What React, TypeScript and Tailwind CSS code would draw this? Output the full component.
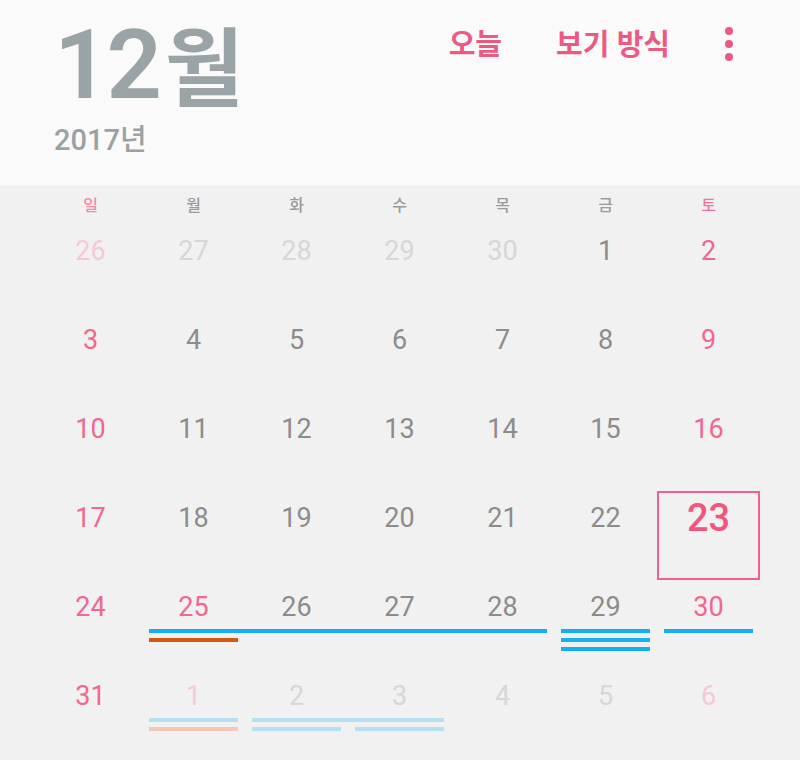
import React from "react";

type Day = { n: number; other?: boolean; weekend?: boolean; today?: boolean };
type Ev = { col: number; span: number; lane: number; color: string };

const weeks: { days: Day[]; events: Ev[] }[] = [
  {
    days: [
      { n: 26, other: true, weekend: true },
      { n: 27, other: true },
      { n: 28, other: true },
      { n: 29, other: true },
      { n: 30, other: true },
      { n: 1 },
      { n: 2, weekend: true },
    ],
    events: [],
  },
  {
    days: [3, 4, 5, 6, 7, 8, 9].map((n, i) => ({ n, weekend: i === 0 || i === 6 })),
    events: [],
  },
  {
    days: [10, 11, 12, 13, 14, 15, 16].map((n, i) => ({ n, weekend: i === 0 || i === 6 })),
    events: [],
  },
  {
    days: [17, 18, 19, 20, 21, 22, 23].map((n, i) => ({
      n,
      weekend: i === 0 || i === 6,
      today: n === 23,
    })),
    events: [],
  },
  {
    days: [24, 25, 26, 27, 28, 29, 30].map((n, i) => ({
      n,
      weekend: i === 0 || i === 6 || n === 25,
    })),
    events: [
      { col: 2, span: 4, lane: 1, color: "bg-[#15b0f1]" },
      { col: 2, span: 1, lane: 2, color: "bg-[#d9560f]" },
      { col: 6, span: 1, lane: 1, color: "bg-[#15b0f1]" },
      { col: 6, span: 1, lane: 2, color: "bg-[#15b0f1]" },
      { col: 6, span: 1, lane: 3, color: "bg-[#15b0f1]" },
      { col: 7, span: 1, lane: 1, color: "bg-[#15b0f1]" },
    ],
  },
  {
    days: [
      { n: 31, weekend: true },
      { n: 1, other: true, weekend: true },
      { n: 2, other: true },
      { n: 3, other: true },
      { n: 4, other: true },
      { n: 5, other: true },
      { n: 6, other: true, weekend: true },
    ],
    events: [
      { col: 2, span: 1, lane: 1, color: "bg-[#b5e0f4]" },
      { col: 2, span: 1, lane: 2, color: "bg-[#f1c9b5]" },
      { col: 3, span: 2, lane: 1, color: "bg-[#b5e0f4]" },
      { col: 3, span: 1, lane: 2, color: "bg-[#b5e0f4]" },
      { col: 4, span: 1, lane: 2, color: "bg-[#b5e0f4]" },
    ],
  },
];

const colStart: Record<number, string> = {
  1: "col-start-1",
  2: "col-start-2",
  3: "col-start-3",
  4: "col-start-4",
  5: "col-start-5",
  6: "col-start-6",
  7: "col-start-7",
};
const colSpan: Record<number, string> = {
  1: "col-span-1",
  2: "col-span-2",
  3: "col-span-3",
  4: "col-span-4",
};
const rowStart: Record<number, string> = {
  1: "row-start-2",
  2: "row-start-3",
  3: "row-start-4",
};

function dayColor(d: Day) {
  if (d.today) return "text-[#f0567f]";
  if (d.other) return d.weekend ? "text-[#f7c8d5]" : "text-[#d7d7d7]";
  return d.weekend ? "text-[#f1678e]" : "text-[#8c8c8c]";
}

export default function App() {
  const weekdays = ["일", "월", "화", "수", "목", "금", "토"];
  return (
    <div
      className="w-[800px] h-[760px] overflow-hidden bg-[#f1f1f1]"
      style={{ fontFamily: '"Roboto", "Noto Sans CJK KR", sans-serif' }}
    >
      <div className="h-[187px] bg-[#fafafa] flex justify-between border-b border-[color:#f4e9eb]">
        <div className="pl-[54px] pt-[14px] text-[#9aa4a7]">
          <div className="h-[100px] flex items-end font-semibold leading-none">
            <span className="text-[97px] tracking-[-3px]">12</span>
            <span className="text-[86px] ml-[6px]">월</span>
          </div>
          <div className="mt-[12px] text-[29px] font-medium leading-none text-[#9aa2a4]">2017년</div>
        </div>
        <div className="flex items-start pt-[26px] pr-[67px] text-[#ec5a84] text-[29px] font-semibold leading-[38px]">
          <span>오늘</span>
          <span className="ml-[54px]">보기 방식</span>
          <div className="ml-[55px] flex flex-col gap-[5px] pt-[1px]">
            <span className="w-[8px] h-[8px] rounded-full bg-[#ec5a84]" />
            <span className="w-[8px] h-[8px] rounded-full bg-[#ec5a84]" />
            <span className="w-[8px] h-[8px] rounded-full bg-[#ec5a84]" />
          </div>
        </div>
      </div>

      <div className="ml-[39px] w-[721px]">
        <div className="grid grid-cols-7 h-[37px] items-center">
          {weekdays.map((w, i) => (
            <div
              key={w}
              className={`text-center text-[16px] font-medium ${
                i === 0 ? "text-[#f28cab]" : i === 6 ? "text-[#f27598]" : "text-[#9b9b9b]"
              }`}
            >
              {w}
            </div>
          ))}
        </div>

        {weeks.map((wk, wi) => (
          <div
            key={wi}
            className="grid grid-cols-7 grid-rows-[49px_9px_9px_9px_13px] h-[89px]"
          >
            {wk.days.map((d, di) =>
              d.today ? (
                <div
                  key={di}
                  className="row-start-1 row-end-6 col-start-7 border-2 border-solid border-[color:#f0608a] flex justify-center"
                >
                  <span className="mt-[6px] text-[38px] leading-[38px] font-medium text-[#f0567f]">
                    {d.n}
                  </span>
                </div>
              ) : (
                <div
                  key={di}
                  className={`row-start-1 flex justify-center ${colStart[di + 1]}`}
                >
                  <span
                    className={`mt-[13px] text-[27px] leading-[28px] ${dayColor(d)}`}
                  >
                    {d.n}
                  </span>
                </div>
              )
            )}
            {wk.events.map((e, ei) => (
              <div
                key={ei}
                className={`${colStart[e.col]} ${colSpan[e.span]} ${rowStart[e.lane]} mx-[7px] h-[4px] ${e.color}`}
              />
            ))}
          </div>
        ))}
      </div>
    </div>
  );
}
